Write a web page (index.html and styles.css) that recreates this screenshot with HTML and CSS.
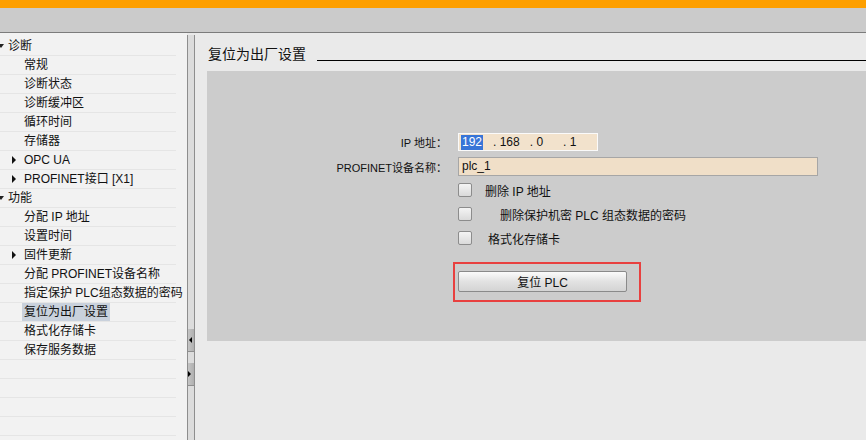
FILE: index.html
```html
<!DOCTYPE html>
<html lang="zh-CN">
<head>
    <meta charset="UTF-8">
    <title>复位为出厂设置</title>
    <link rel="stylesheet" href="styles.css">
</head>
<body>
    <div class="top-bar"></div>
    <div class="tool-band"></div>

    <div class="main">
        <!-- Navigation tree -->
        <div class="tree">
            <div class="tree-row level-0"><span class="arrow-down"></span>诊断</div>
            <div class="tree-row">常规</div>
            <div class="tree-row">诊断状态</div>
            <div class="tree-row">诊断缓冲区</div>
            <div class="tree-row">循环时间</div>
            <div class="tree-row">存储器</div>
            <div class="tree-row"><span class="arrow-right"></span>OPC UA</div>
            <div class="tree-row"><span class="arrow-right"></span>PROFINET接口 [X1]</div>
            <div class="tree-row level-0"><span class="arrow-down"></span>功能</div>
            <div class="tree-row">分配 IP 地址</div>
            <div class="tree-row">设置时间</div>
            <div class="tree-row"><span class="arrow-right"></span>固件更新</div>
            <div class="tree-row">分配 PROFINET设备名称</div>
            <div class="tree-row">指定保护 PLC组态数据的密码</div>
            <div class="tree-row"><span class="selected">复位为出厂设置</span></div>
            <div class="tree-row">格式化存储卡</div>
            <div class="tree-row">保存服务数据</div>
            <div class="tree-row"></div>
            <div class="tree-row"></div>
            <div class="tree-row"></div>
            <div class="tree-row"></div>
        </div>

        <!-- Splitter -->
        <div class="splitter">
            <div class="splitter-btn"><span class="tri-left"></span></div>
            <div class="splitter-btn"><span class="tri-right"></span></div>
        </div>

        <!-- Content -->
        <div class="content">
            <div class="section-title">
                <span>复位为出厂设置</span>
                <div class="title-line"></div>
            </div>
            <div class="form-box">
                <div class="form-row ip-row">
                    <div class="form-label">IP 地址：</div>
                    <div class="ip-field">
                        <span class="ip-sel">192</span>
                        <span class="ip-part">. 168</span>
                        <span class="ip-part">. 0</span>
                        <span class="ip-part last">. 1</span>
                    </div>
                </div>
                <div class="form-row name-row">
                    <div class="form-label">PROFINET设备名称：</div>
                    <div class="name-field">plc_1</div>
                </div>
                <div class="check-row">
                    <span class="check"></span>
                    <span class="check-label pad-13">删除 IP 地址</span>
                </div>
                <div class="check-row">
                    <span class="check"></span>
                    <span class="check-label pad-28">删除保护机密 PLC 组态数据的密码</span>
                </div>
                <div class="check-row">
                    <span class="check"></span>
                    <span class="check-label pad-16">格式化存储卡</span>
                </div>
                <div class="reset-frame">
                    <button class="reset-button">复位 PLC</button>
                </div>
            </div>
        </div>
    </div>
</body>
</html>
```

FILE: styles.css
```css
* {
    margin: 0;
    padding: 0;
    box-sizing: border-box;
}

body {
    width: 866px;
    height: 440px;
    overflow: hidden;
    background-color: #e9e9e9;
    font-family: 'Liberation Sans', 'Noto Sans CJK SC', sans-serif;
    font-size: 12px;
    color: #111;
}

.top-bar {
    height: 8px;
    background-color: #fd9f00;
}

.tool-band {
    height: 25px;
    background-color: #cbcbcb;
    border-bottom: 1px solid #7c7c7c;
}

.main {
    display: flex;
    height: 407px;
}

/* Tree */
.tree {
    width: 187px;
    background-color: #f2f2f2;
    padding-top: 4px;
    overflow: hidden;
}

.tree-row {
    position: relative;
    width: 176px;
    height: 19px;
    line-height: 18px;
    padding-left: 24px;
    border-bottom: 1px solid #e5e5e5;
    white-space: nowrap;
}

.tree-row.level-0 {
    padding-left: 8px;
}

.arrow-down {
    position: absolute;
    left: -2px;
    top: 7px;
    border-left: 3px solid transparent;
    border-right: 3px solid transparent;
    border-top: 4px solid #222;
}

.arrow-right {
    position: absolute;
    left: 12px;
    top: 5px;
    border-top: 4px solid transparent;
    border-bottom: 4px solid transparent;
    border-left: 4px solid #111;
}

.selected {
    display: inline-block;
    background-color: #c9d1dc;
    margin-left: -2px;
    padding: 0 2px;
    height: 18px;
}

/* Splitter */
.splitter {
    width: 8px;
    margin-top: 2px;
    background-color: #dcdcdc;
    border-left: 1px solid #8e8e8e;
    border-right: 1px solid #8e8e8e;
    display: flex;
    flex-direction: column;
    padding-top: 294px;
    gap: 11px;
}

.splitter-btn {
    height: 23px;
    background: linear-gradient(to right, #c4c4c4, #b0b0b0);
    border-bottom: 1px solid #8e8e8e;
    display: flex;
    align-items: center;
}

.tri-left {
    margin-left: 1px;
    border-top: 3px solid transparent;
    border-bottom: 3px solid transparent;
    border-right: 3px solid #000;
}

.tri-right {
    border-top: 3px solid transparent;
    border-bottom: 3px solid transparent;
    border-left: 3px solid #000;
}

/* Content */
.content {
    flex: 1;
    padding-left: 12px;
    background-color: #eaeaea;
}

.section-title {
    display: flex;
    align-items: flex-end;
    height: 29px;
    padding-left: 1px;
    font-size: 14px;
}

.section-title span {
    line-height: 16px;
}

.title-line {
    flex: 1;
    margin-left: 11px;
    border-bottom: 1px solid #000;
    margin-bottom: 1px;
}

.form-box {
    margin-top: 9px;
    height: 270px;
    background-color: #cccccc;
    padding-top: 62px;
}

.form-row {
    display: flex;
    align-items: center;
    height: 19px;
    margin-bottom: 5px;
}

.ip-row {
    height: 18px;
    margin-bottom: 6px;
}

.name-row {
    margin-bottom: 2px;
}

.form-label {
    width: 240px;
    text-align: right;
    font-size: 11px;
}

.ip-field {
    margin-left: 11px;
    width: 140px;
    height: 18px;
    background-color: #f2e2cc;
    border: 1px solid #fafafa;
    display: flex;
    align-items: center;
    padding-left: 2px;
}

.ip-sel {
    background-color: #3875d7;
    color: #fff;
    padding: 0 1px;
    line-height: 15px;
}

.ip-part {
    margin-left: 10px;
}

.ip-part.last {
    margin-left: 20px;
}

.name-field {
    margin-left: 11px;
    width: 360px;
    height: 19px;
    line-height: 17px;
    background-color: #f0dfc8;
    border: 1px solid #a6a6a6;
    padding-left: 3px;
}

.check-row {
    display: flex;
    align-items: center;
    height: 24px;
    padding-left: 251px;
}

.check {
    width: 14px;
    height: 14px;
    border: 1px solid #8c8c8c;
    border-radius: 2px;
    background: linear-gradient(to bottom, #f4f4f4, #dadada);
}

.pad-13 { margin-left: 13px; }
.pad-28 { margin-left: 28px; }
.pad-16 { margin-left: 16px; }

.reset-frame {
    margin-top: 12px;
    margin-left: 246px;
    width: 188px;
    height: 40px;
    border: 2px solid #e8403f;
    padding: 7px 12px 8px 3px;
}

.reset-button {
    width: 169px;
    height: 21px;
    border: 1px solid #8a8a8a;
    border-radius: 2px;
    background: linear-gradient(to bottom, #fbfbfb, #e2e2e2 50%, #d4d4d4);
    font-family: 'Liberation Sans', 'Noto Sans CJK SC', sans-serif;
    font-size: 12px;
    color: #111;
}
```
